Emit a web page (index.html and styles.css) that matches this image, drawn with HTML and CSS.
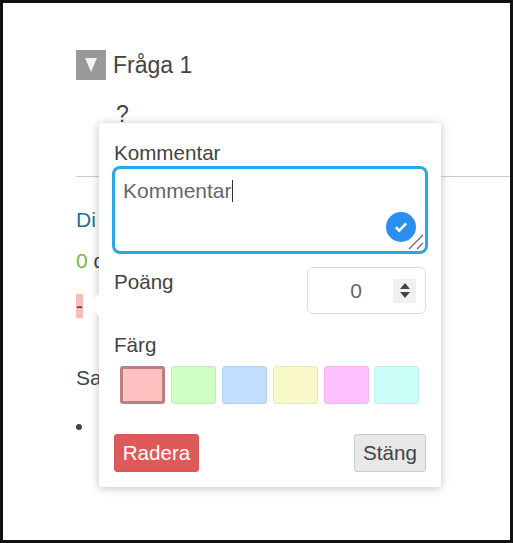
FILE: index.html
```html
<!DOCTYPE html>
<html lang="en">
<head>
    <meta charset="UTF-8">
    <meta name="viewport" content="width=device-width, initial-scale=1.0">
    <title>Fråga 1</title>
    <link rel="stylesheet" href="styles.css">
</head>
<body>
    <div class="frame">
        <div class="question-head">
            <div class="toggle"><span class="toggle-arrow"></span></div>
            <h2>Fråga 1</h2>
        </div>
        <p class="question-text">?</p>
        <hr class="divider">

        <div class="answers">
            <a class="answer-link" href="#">Di</a>
            <p class="count"><span class="count-num">0</span> d</p>
            <p class="mark-row"><span class="mark">-</span></p>
            <p class="summary">Sa</p>
            <ul class="summary-list">
                <li>&nbsp;</li>
            </ul>
        </div>

        <!-- comment popover -->
        <div class="popover">
            <span class="popover-arrow"></span>
            <label class="field-label">Kommentar</label>
            <div class="comment-box">
                <span class="comment-text">Kommentar</span><span class="caret"></span>
                <span class="check">
                    <svg width="14" height="12" viewBox="0 0 14 12"><path d="M1.8 6.2 L5.3 9.6 L12.2 2.4" fill="none" stroke="#fff" stroke-width="2.6"/></svg>
                </span>
                <svg class="resize" width="16" height="16" viewBox="0 0 16 16"><path d="M1 15 L15 1 M9 15 L15 9" stroke="#666" stroke-width="1.2"/></svg>
            </div>

            <div class="score-row">
                <label class="field-label score-label">Poäng</label>
                <div class="score-input">
                    <span class="score-value">0</span>
                    <span class="spinner">
                        <span class="spin-up"></span>
                        <span class="spin-down"></span>
                    </span>
                </div>
            </div>

            <label class="field-label color-label">Färg</label>
            <div class="swatches">
                <div class="swatch swatch-red selected"></div>
                <div class="swatch swatch-green"></div>
                <div class="swatch swatch-blue"></div>
                <div class="swatch swatch-yellow"></div>
                <div class="swatch swatch-pink"></div>
                <div class="swatch swatch-cyan"></div>
            </div>

            <div class="popover-buttons">
                <button class="btn-delete">Radera</button>
                <button class="btn-close">Stäng</button>
            </div>
        </div>
    </div>
</body>
</html>
```

FILE: styles.css
```css
* {
    margin: 0;
    padding: 0;
    box-sizing: border-box;
    font-family: "Liberation Sans", Arial, sans-serif;
}

html, body {
    height: 100%;
    background: #fff;
    overflow: hidden;
}

.frame {
    position: relative;
    height: 543px;
    border: 3px solid #111;
    padding: 46px 0 0 73px;
    color: #444;
    overflow: hidden;
}

.question-head {
    display: flex;
    align-items: center;
    gap: 7px;
}

.toggle {
    width: 30px;
    height: 30px;
    background: #999;
    display: flex;
    align-items: center;
    justify-content: center;
}

.toggle-arrow {
    width: 0;
    height: 0;
    border-left: 6px solid transparent;
    border-right: 6px solid transparent;
    border-top: 14px solid #f2f2f2;
}

.question-head h2 {
    font-size: 23px;
    font-weight: normal;
    line-height: 32px;
}

.question-text {
    font-size: 23px;
    line-height: 26px;
    margin: 20px 0 0 40px;
}

.divider {
    border: 0;
    border-top: 1px solid #ccc;
    margin-top: 49px;
}

.answers {
    font-size: 21px;
}

.answer-link {
    display: block;
    margin-top: 31px;
    line-height: 24px;
    color: #23709e;
    text-decoration: none;
}

.count {
    margin-top: 17px;
    line-height: 24px;
}

.count-num {
    color: #6cbb3c;
}

.mark-row {
    margin-top: 21px;
    height: 24px;
}

.mark {
    display: inline-block;
    width: 7px;
    height: 24px;
    line-height: 24px;
    background: #ffbbbb;
    overflow: hidden;
}

.summary {
    margin-top: 48px;
    line-height: 24px;
}

.summary-list {
    margin: 24px 0 0 19px;
    line-height: 24px;
}

.popover {
    position: absolute;
    left: 96px;
    top: 120px;
    width: 342px;
    height: 364px;
    background: #fff;
    border-radius: 3px;
    box-shadow: 0 1px 10px rgba(0, 0, 0, 0.25);
    padding: 18px 15px 0 15px;
}

.popover-arrow {
    position: absolute;
    left: -12px;
    top: 171px;
    width: 0;
    height: 0;
    border-top: 11px solid transparent;
    border-bottom: 11px solid transparent;
    border-right: 12px solid #fff;
}

.field-label {
    display: block;
    font-size: 20.6px;
    line-height: 23px;
    color: #444;
}

.comment-box {
    position: relative;
    height: 88px;
    margin: 2px -2px 0 -2px;
    border: 3px solid #2ba6e6;
    border-radius: 8px;
    padding: 10px 8px;
    font-size: 21px;
    line-height: 24px;
    color: #666;
}

.caret {
    display: inline-block;
    width: 1px;
    height: 22px;
    background: #333;
    vertical-align: -4px;
}

.check {
    position: absolute;
    right: 9px;
    bottom: 9px;
    width: 30px;
    height: 30px;
    border-radius: 50%;
    background: #2c8ff0;
    display: flex;
    align-items: center;
    justify-content: center;
}

.resize {
    position: absolute;
    right: 1px;
    bottom: 1px;
}

.score-row {
    display: flex;
    justify-content: space-between;
    align-items: flex-start;
    margin-top: 13px;
}

.score-label {
    margin-top: 3px;
}

.score-input {
    width: 119px;
    height: 47px;
    border: 1px solid #ddd;
    border-radius: 6px;
    display: flex;
    align-items: center;
    justify-content: flex-end;
    padding-right: 9px;
    font-size: 21px;
    color: #666;
}

.score-value {
    margin-right: 31px;
}

.spinner {
    width: 23px;
    height: 24px;
    background: #f0f0f0;
    display: flex;
    flex-direction: column;
    align-items: center;
    justify-content: center;
    gap: 3px;
}

.spin-up {
    border-left: 5px solid transparent;
    border-right: 5px solid transparent;
    border-bottom: 6px solid #444;
}

.spin-down {
    border-left: 5px solid transparent;
    border-right: 5px solid transparent;
    border-top: 6px solid #444;
}

.color-label {
    margin-top: 19px;
}

.swatches {
    display: flex;
    gap: 5.9px;
    margin: 10px 0 0 6px;
}

.swatch {
    width: 45px;
    height: 38px;
    border-radius: 3px;
    border: 1px solid;
}

.swatch.selected {
    border: 3px solid #b88080;
}

.swatch-red { background: #ffc0c0; border-color: #ffc0c0; }
.swatch-green { background: #d0ffc4; border-color: #bfeeb4; }
.swatch-blue { background: #c2deff; border-color: #b0d0f2; }
.swatch-yellow { background: #f8f8c8; border-color: #e8e8b8; }
.swatch-pink { background: #ffc0ff; border-color: #f4b4f4; }
.swatch-cyan { background: #ccfff8; border-color: #bcf0e8; }

.popover-buttons {
    display: flex;
    justify-content: space-between;
    align-items: flex-end;
    margin-top: 30px;
}

.popover-buttons button {
    height: 38px;
    font-size: 20.6px;
    border-radius: 3px;
    padding: 0;
}

.btn-delete {
    width: 85px;
    background: #dd5a5a;
    color: #fff;
    border: 1px solid #d85555;
}

.btn-close {
    width: 72px;
    background: #e8e8e8;
    color: #444;
    border: 1px solid #ccc;
}
```
